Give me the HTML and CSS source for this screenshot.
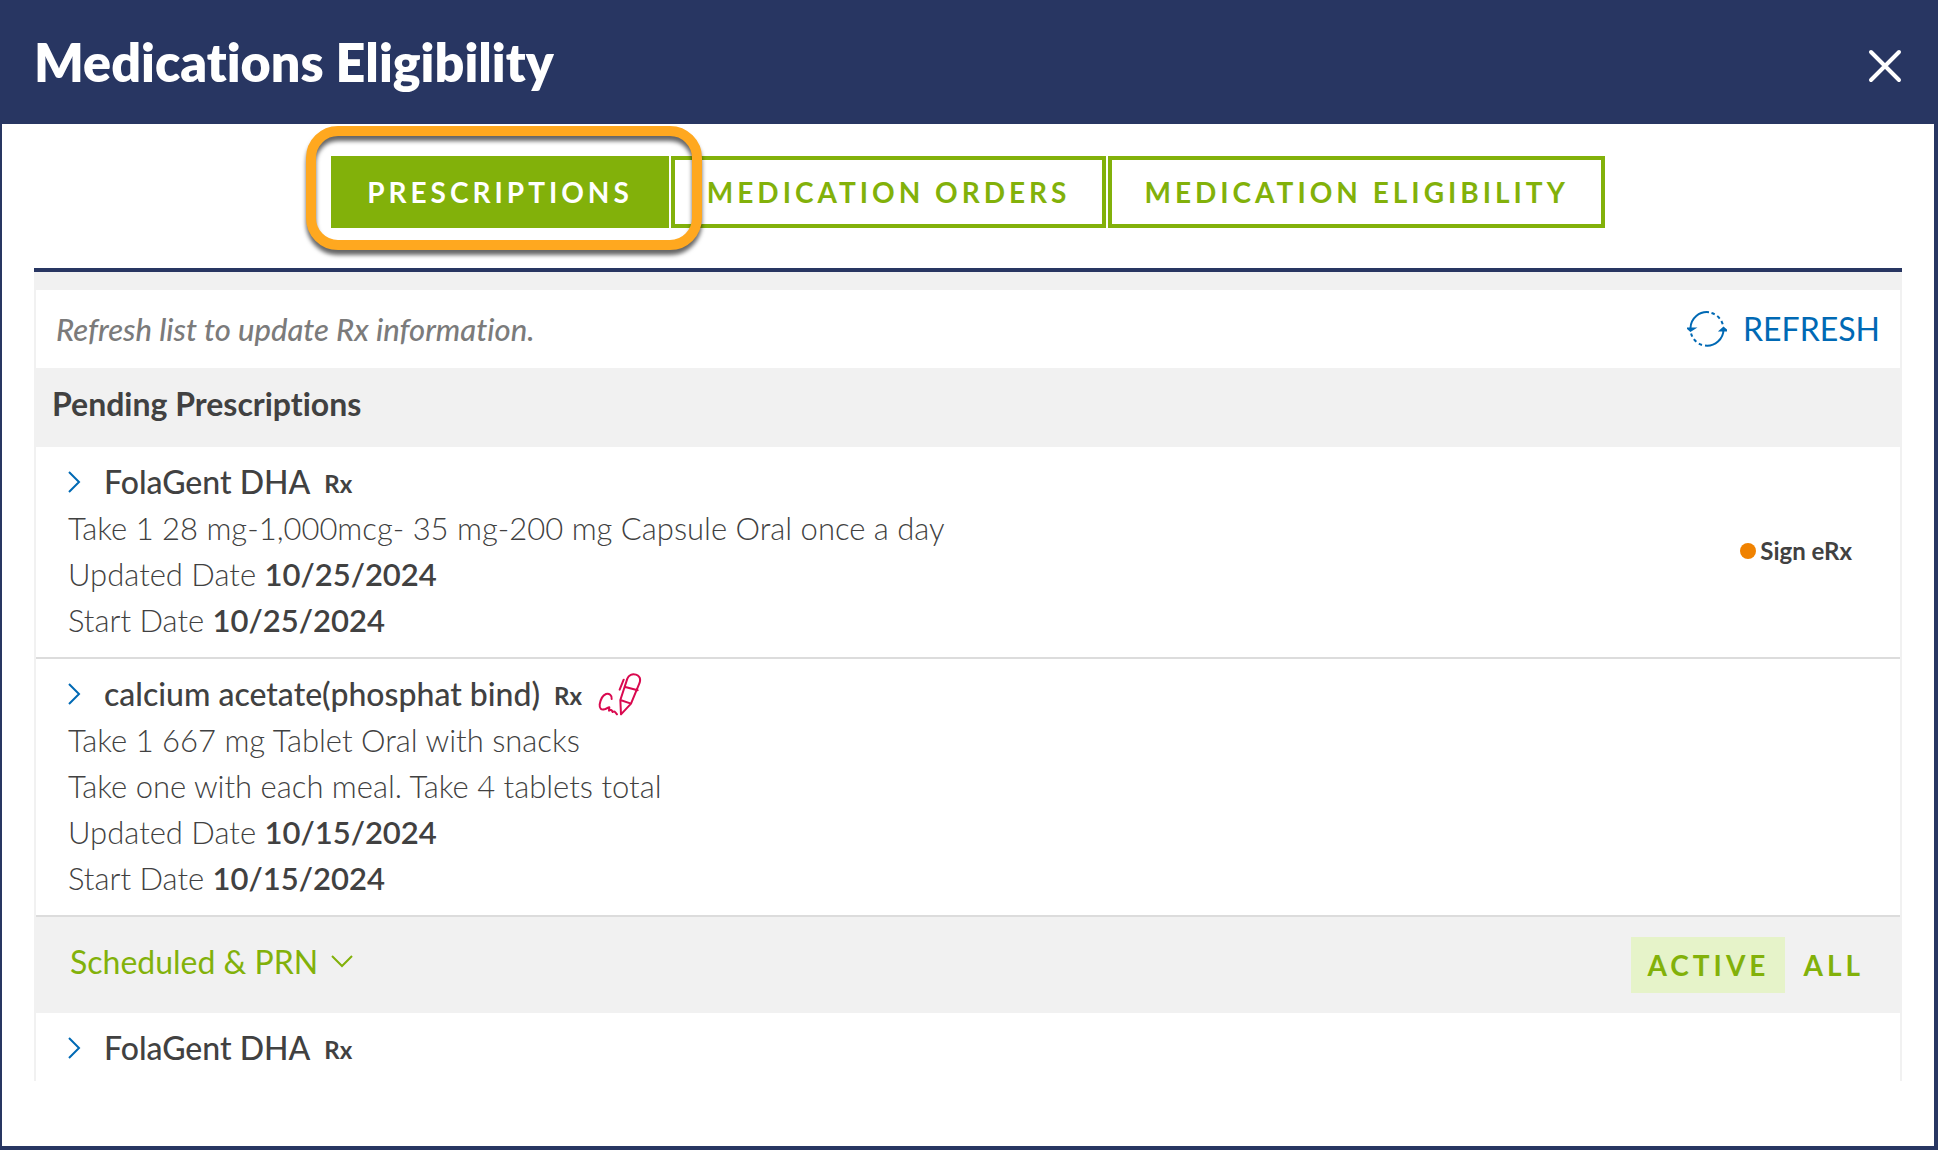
FILE: index.html
```html
<!DOCTYPE html>
<html lang="en">
<head>
<meta charset="utf-8">
<meta name="viewport" content="width=device-width, initial-scale=1">
<title>Medications Eligibility</title>
<link rel="stylesheet" href="styles.css">
</head>
<body>
<main class="modal">
  <header class="modal-header">
    <h1 class="modal-title">Medications Eligibility</h1>
    <button class="close" type="button" aria-label="Close">
      <svg width="34" height="34" viewBox="0 0 34 34" fill="none" stroke="currentColor" stroke-width="4" stroke-linecap="round"><path d="M3 3l28 28M31 3L3 31"/></svg>
    </button>
  </header>

  <nav class="tabs" aria-label="Medication views">
    <div class="tab-spot">
      <button class="tab tab-selected" type="button" aria-pressed="true">PRESCRIPTIONS</button>
      <span class="ring"></span>
    </div>
    <button class="tab" type="button">MEDICATION ORDERS</button>
    <button class="tab" type="button">MEDICATION ELIGIBILITY</button>
  </nav>

  <section class="panel">
    <div class="refresh-bar">
      <p class="hint">Refresh list to update Rx information.</p>
      <button class="refresh" type="button">
        <svg width="40" height="36" viewBox="0 0 40 36" fill="none" stroke="currentColor" stroke-width="2">
          <path d="M22 1.2A16.5 16.5 0 0 0 3.500 17"/>
          <path d="M18 34.500A16.500 16.500 0 0 0 36.500 18"/>
          <path d="M24.500 2A16.500 16.500 0 0 1 36 14.500" stroke-dasharray="3.500 3"/>
          <path d="M15 34A16.500 16.500 0 0 1 4 22" stroke-dasharray="3.500 3"/>
          <path d="M1 17.500l2.500 2.200 3.500-2.200zM33.500 19.500l3-2.700 3 2.700z" fill="currentColor"/>
        </svg>
        REFRESH
      </button>
    </div>

    <h2 class="group-title">Pending Prescriptions</h2>

    <article class="rx">
      <div class="rx-body">
        <h3 class="rx-name">
          <button class="expand" type="button" aria-label="Expand FolaGent DHA" aria-expanded="false"><svg width="14" height="24" viewBox="0 0 14 24" fill="none" stroke="currentColor" stroke-width="2"><path d="M1 2l10 10L1 22"/></svg></button>
          FolaGent DHA <span class="rx-tag">Rx</span>
        </h3>
        <p>Take 1 28 mg-1,000mcg- 35 mg-200 mg Capsule Oral once a day</p>
        <p>Updated Date <b>10/25/2024</b></p>
        <p>Start Date <b>10/25/2024</b></p>
      </div>
      <div class="status"><span class="dot"></span>Sign eRx</div>
    </article>

    <article class="rx">
      <div class="rx-body">
        <h3 class="rx-name">
          <button class="expand" type="button" aria-label="Expand calcium acetate" aria-expanded="false"><svg width="14" height="24" viewBox="0 0 14 24" fill="none" stroke="currentColor" stroke-width="2"><path d="M1 2l10 10L1 22"/></svg></button>
          calcium acetate(phosphat bind) <span class="rx-tag">Rx</span>
          <svg class="sign" width="44" height="44" viewBox="0 0 132 132" fill="none" stroke="currentColor" stroke-width="6" stroke-linecap="round" stroke-linejoin="round">
            <path d="M41 81C43 70 33 63 24 66C14 70 7 86 5 97C4 110 10 114 19 112C25 110 30 107 34 106L33 116C38 113 41 113 44 120C49 117 50 118 57 127"/>
            <path d="M69 127L67 84L88 20C92 9 103 4 114 8C125 12 128 22 125 32L99 95zM67 84L99 95M82 45L119 55M77 23L65 53"/>
          </svg>
        </h3>
        <p>Take 1 667 mg Tablet Oral with snacks</p>
        <p>Take one with each meal. Take 4 tablets total</p>
        <p>Updated Date <b>10/15/2024</b></p>
        <p>Start Date <b>10/15/2024</b></p>
      </div>
    </article>

    <div class="filter-bar">
      <button class="filter-menu" type="button" aria-expanded="true">
        Scheduled &amp; PRN
        <svg width="24" height="14" viewBox="0 0 24 14" fill="none" stroke="currentColor" stroke-width="2"><path d="M2 1l10 10L22 1"/></svg>
      </button>
      <div class="toggle">
        <button class="toggle-item toggle-on" type="button" aria-pressed="true">ACTIVE</button>
        <button class="toggle-item" type="button" aria-pressed="false">ALL</button>
      </div>
    </div>

    <article class="rx">
      <div class="rx-body">
        <h3 class="rx-name">
          <button class="expand" type="button" aria-label="Expand FolaGent DHA" aria-expanded="false"><svg width="14" height="24" viewBox="0 0 14 24" fill="none" stroke="currentColor" stroke-width="2"><path d="M1 2l10 10L1 22"/></svg></button>
          FolaGent DHA <span class="rx-tag">Rx</span>
        </h3>
      </div>
    </article>
  </section>
</main>
</body>
</html>
```
FILE: styles.css
```css
:root {
  --navy: #283662;
  --green: #82b10a;
  --blue: #0069b4;
  --grey: #f1f1f1;
  --text: #414141;
}

* { box-sizing: border-box; }

body {
  margin: 0;
  background: #fff;
  color: var(--text);
  font: 300 31px/46px Lato, "Open Sans", sans-serif;
  font-variant-ligatures: none;
}

h1, h2, h3, p { margin: 0; }

button {
  margin: 0;
  padding: 0;
  border: 0;
  background: none;
  color: inherit;
  font: inherit;
  font-variant-ligatures: none;
  cursor: pointer;
}

svg { display: block; flex: none; }

.modal {
  min-height: 100vh;
  padding-bottom: 64px;
  border: solid var(--navy);
  border-width: 0 4px 4px 2px;
}

.modal-header {
  display: flex;
  align-items: center;
  justify-content: space-between;
  padding: 32px;
  background: var(--navy);
  color: #fff;
}

.modal-title {
  font-size: 52px;
  font-weight: 800;
  line-height: 60px;
}

.close { padding-top: 8px; }

.tabs {
  display: flex;
  justify-content: center;
  gap: 2px;
  padding: 32px;
}

.tab-spot {
  position: relative;
  display: flex;
}

.tab {
  height: 72px;
  padding: 0 32px;
  border: 4px solid var(--green);
  color: var(--green);
  font-size: 28px;
  font-weight: 700;
  letter-spacing: 4px;
  white-space: nowrap;
}

.tab-selected {
  background: var(--green);
  color: #fff;
}

.ring {
  position: absolute;
  inset: -30px -33px -22px -25px;
  border: 10px solid #ffa81f;
  border-radius: 32px;
  filter: drop-shadow(0 5px 2px rgba(0, 0, 0, .6));
  pointer-events: none;
}

.panel {
  margin: 8px 32px 0;
  border: 2px solid var(--grey);
  border-width: 0 2px;
}

.panel::before {
  content: "";
  display: block;
  height: 18px;
  margin: 0 -2px;
  border-top: 4px solid var(--navy);
  background: var(--grey);
}

.refresh-bar {
  display: flex;
  align-items: center;
  justify-content: space-between;
  padding: 16px 20px;
}

.hint {
  color: #7b7b7b;
  font-style: italic;
  font-weight: 500;
}

.refresh {
  display: flex;
  align-items: center;
  gap: 16px;
  color: var(--blue);
  font-size: 32px;
  font-weight: 400;
}

.group-title {
  padding: 13px 16px 20px;
  background: var(--grey);
  font-size: 32px;
  font-weight: 700;
}

.rx {
  display: flex;
  align-items: center;
  justify-content: space-between;
  padding: 12px 48px 14px 32px;
}

.rx:last-child { padding-bottom: 10px; }

.rx + .rx { border-top: 2px solid #dcdcdc; }

.rx b { font-weight: 600; }

.rx-name {
  display: flex;
  align-items: center;
  height: 46px;
  font-size: 32px;
  font-weight: 500;
}

.expand {
  width: 36px;
  color: var(--blue);
}

.rx-tag {
  padding: 4px 0 0 14px;
  font-size: 24px;
  font-weight: 700;
}

.sign {
  margin-left: 16px;
  color: #d9094f;
}

.status {
  display: flex;
  align-items: center;
  gap: 4px;
  font-size: 24px;
  font-weight: 700;
}

.dot {
  width: 16px;
  height: 16px;
  border-radius: 50%;
  background: #f08200;
}

.filter-bar {
  display: flex;
  align-items: center;
  justify-content: space-between;
  padding: 20px 20px 20px 34px;
  border-top: 2px solid #dcdcdc;
  background: var(--grey);
}

.filter-menu {
  display: flex;
  align-items: center;
  gap: 12px;
  padding-bottom: 6px;
  color: var(--green);
  font-size: 32px;
  font-weight: 400;
}

.toggle { display: flex; gap: 2px; }

.toggle-item {
  height: 56px;
  padding: 0 16px;
  color: var(--green);
  font-size: 28px;
  font-weight: 700;
  letter-spacing: 4px;
}

.toggle-on { background: #e6f3c9; }
```
